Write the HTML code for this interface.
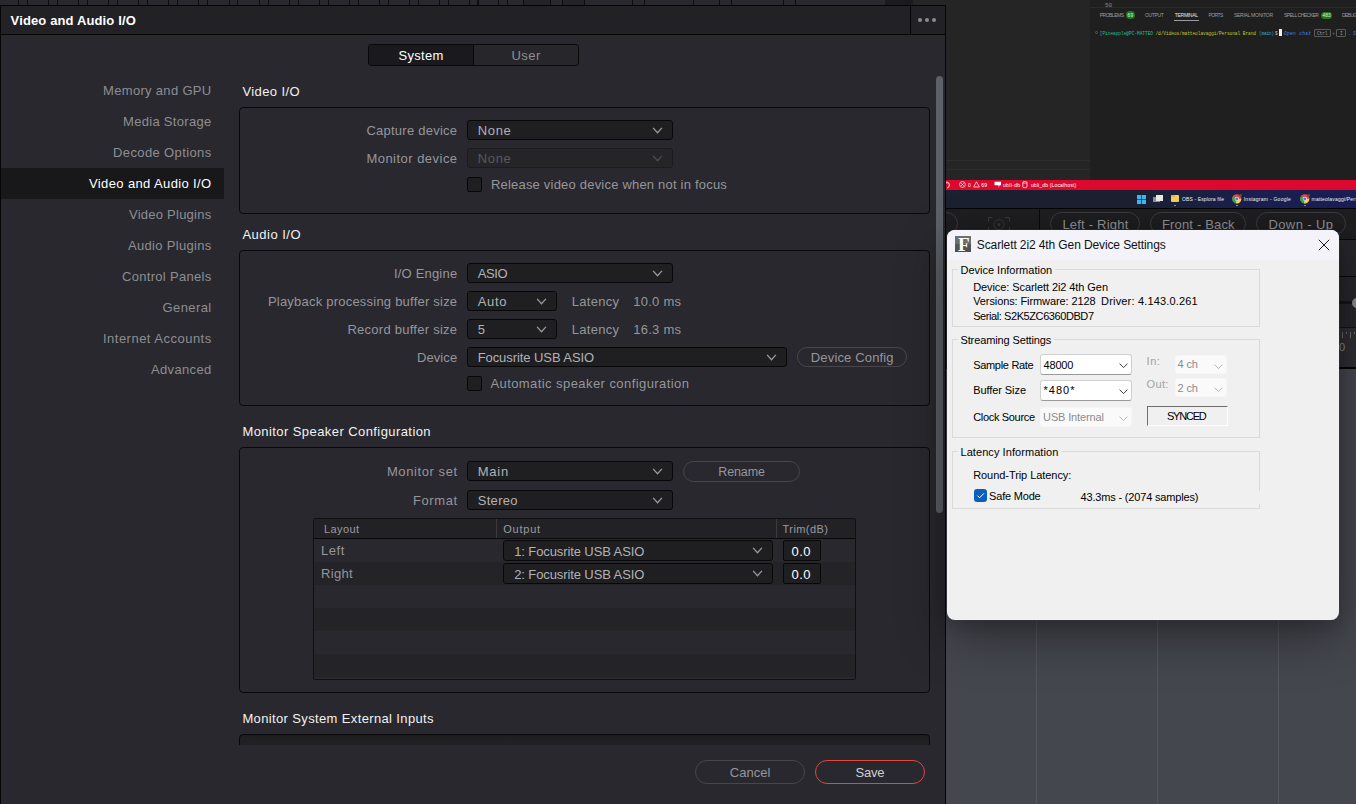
<!DOCTYPE html>
<html lang="en"><head><meta charset="utf-8"><title>Video and Audio I/O</title>
<style>
html,body{margin:0;padding:0;}
body{width:1356px;height:804px;overflow:hidden;position:relative;background:#252526;font-family:'Liberation Sans', sans-serif;}
.L{position:absolute;left:0;top:0;width:1356px;height:804px;overflow:hidden;}
.L div,.L span,.L svg{position:absolute;box-sizing:border-box;}
.L span{white-space:pre;line-height:1;}
</style></head><body>

<div class="L">
<div style="left:946px;top:0px;width:144px;height:180px;background:#252526;"></div>
<div style="left:1090px;top:0px;width:266px;height:180px;background:#1f1f1f;"></div>
<div style="left:1090px;top:7px;width:266px;height:1px;background:#2b2b2b;"></div>
<div style="left:946px;top:160px;width:144px;height:1px;background:#2d2d2e;"></div>
<div style="left:946px;top:169px;width:144px;height:1px;background:#2d2d2e;"></div>
<div style="left:946px;top:180px;width:410px;height:10px;background:#dc082e;"></div>
<div style="left:946px;top:190px;width:410px;height:18px;background:linear-gradient(90deg,#1b2130 0,#1b2130 45%,#1a2050 75%,#191f55 100%);"></div>
<div style="left:946px;top:208px;width:410px;height:1px;background:#050506;"></div>
<div style="left:946px;top:209px;width:410px;height:160px;background:#1e1e20;"></div>
<div style="left:1039px;top:209px;width:1px;height:30px;background:#0a0a0b;"></div>
<div style="left:1339px;top:239px;width:17px;height:1px;background:#08080a;"></div>
<div style="left:1339px;top:240px;width:17px;height:36px;background:#27272b;"></div>
<div style="left:1339px;top:276px;width:17px;height:1px;background:#08080a;"></div>
<div style="left:1339px;top:277px;width:17px;height:50px;background:#27272b;"></div>
<div style="left:1339px;top:301px;width:17px;height:3px;background:#151517;"></div>
<div style="left:1351.5px;top:297.5px;width:10px;height:10px;background:#8a8a8c;border-radius:50%;"></div>
<div style="left:1339px;top:327px;width:17px;height:1px;background:#141416;"></div>
<div style="left:1339px;top:328px;width:17px;height:39px;background:#2f2f34;"></div>
<div style="left:1342px;top:332px;width:1px;height:6px;background:#6a6a6e;"></div>
<div style="left:1346px;top:332px;width:1px;height:2px;background:#6a6a6e;"></div>
<div style="left:1350px;top:332px;width:1px;height:6px;background:#6a6a6e;"></div>
<div style="left:1354px;top:332px;width:1px;height:2px;background:#6a6a6e;"></div>
<span style="top:342px;font-size:11px;color:#8a8a8e;left:1338.96px;">0</span>
<div style="left:946px;top:367px;width:410px;height:2px;background:#060607;"></div>
<div style="left:946px;top:369px;width:410px;height:435px;background:#45474f;"></div>
<div style="left:1036px;top:369px;width:1px;height:435px;background:#55575d;"></div>
<div style="left:1157px;top:369px;width:1px;height:435px;background:#55575d;"></div>
<div style="left:1278px;top:369px;width:1px;height:435px;background:#55575d;"></div>
<div style="left:1050px;top:212px;width:90px;height:23px;border:1px solid #3c3c40;border-radius:12px;"></div>
<span style="top:217.5px;font-size:13px;color:#939398;letter-spacing:0.21px;left:1062.4px;">Left - Right</span>
<div style="left:1150px;top:212px;width:96px;height:23px;border:1px solid #3c3c40;border-radius:12px;"></div>
<span style="top:217.5px;font-size:13px;color:#939398;letter-spacing:0.173px;left:1161.9px;">Front - Back</span>
<div style="left:1256px;top:212px;width:90px;height:23px;border:1px solid #3c3c40;border-radius:12px;"></div>
<span style="top:217.5px;font-size:13px;color:#939398;letter-spacing:0.41px;left:1268.4px;">Down - Up</span>
<div style="left:928px;top:212px;width:30px;height:23px;border:1px solid #3c3c40;border-radius:12px;"></div>
<svg style="left:987px;top:216px" width="24" height="16" viewBox="0 0 24 16"><g fill="none" stroke="#3a3a3e" stroke-width="1"><path d="M1.5 5.5V1.5H5.5M18.5 1.5h4V5.5M1.5 11.5V16M22.5 11.5V16"/><circle cx="12" cy="8.7" r="5"/></g><circle cx="12" cy="8.7" r="1.4" fill="#3a3a3e"/></svg>
<span style="top:2.7px;font-size:6px;color:#8a8a8a;font-family:'Liberation Mono', monospace;letter-spacing:-0.019px;left:1104.91px;">50</span>
<span style="top:13px;font-size:5px;color:#9d9d9d;letter-spacing:-0.495px;left:1099.68px;">PROBLEMS</span>
<div style="left:1125.6px;top:10.8px;width:9.4px;height:8.6px;background:#1e7b1e;border-radius:5px;"></div>
<span style="top:14px;font-size:4.6px;color:#e8f5e8;letter-spacing:0.417px;left:1127.53px;">69</span>
<span style="top:13px;font-size:5px;color:#9d9d9d;letter-spacing:-0.346px;left:1144.88px;">OUTPUT</span>
<span style="top:13px;font-size:5px;color:#e4e4e4;letter-spacing:-0.293px;left:1174.78px;">TERMINAL</span>
<div style="left:1173.6px;top:19.7px;width:25.4px;height:0.8px;background:#9c9c9c;"></div>
<span style="top:13px;font-size:5px;color:#9d9d9d;letter-spacing:-0.602px;left:1208.58px;">PORTS</span>
<span style="top:13px;font-size:5px;color:#9d9d9d;letter-spacing:-0.253px;left:1233.88px;">SERIAL MONITOR</span>
<span style="top:13px;font-size:5px;color:#9d9d9d;letter-spacing:-0.516px;left:1283.88px;">SPELL CHECKER</span>
<div style="left:1320.6px;top:11.5px;width:11.8px;height:7.6px;background:#1e7b1e;border-radius:4px;"></div>
<span style="top:14px;font-size:4.6px;color:#e8f5e8;letter-spacing:0.135px;left:1322.53px;">483</span>
<span style="top:13px;font-size:5px;color:#9d9d9d;letter-spacing:-0.616px;left:1341.88px;">DEBUG CONSOLE</span>
<div style="left:1094.6px;top:31.2px;width:3px;height:3px;border:0.6px solid #5c5c5c;border-radius:50%;"></div>
<span style="top:31.8px;font-size:4.5px;color:#1fbf8f;font-family:'Liberation Mono', monospace;letter-spacing:-0.036px;left:1099.73px;">[Pineapple@PC-MATTEO</span>
<span style="top:31.8px;font-size:4.5px;color:#c4c42c;font-family:'Liberation Mono', monospace;letter-spacing:-0.054px;left:1155.43px;">/d/Videos/matteolavaggi/Personal Brand</span>
<span style="top:31.8px;font-size:4.5px;color:#2fa9c9;font-family:'Liberation Mono', monospace;letter-spacing:-0.213px;left:1258.93px;">(main)</span>
<span style="top:31.8px;font-size:4.5px;color:#cfcfcf;font-family:'Liberation Mono', monospace;left:1274.93px;">$</span>
<div style="left:1279px;top:29px;width:2.6px;height:7px;background:#f0f0f0;"></div>
<span style="top:31.8px;font-size:4.5px;color:#3f86e0;font-family:'Liberation Mono', monospace;letter-spacing:0.353px;left:1283.93px;font-style:italic;">Open chat</span>
<div style="left:1313.8px;top:29.3px;width:17.4px;height:7.4px;border:0.6px solid #5a5a5a;border-radius:1px;"></div>
<span style="top:31.8px;font-size:4.5px;color:#a0a0a0;font-family:'Liberation Mono', monospace;letter-spacing:-0.058px;left:1316.93px;">Ctrl</span>
<span style="top:31.8px;font-size:4.5px;color:#7a7a7a;font-family:'Liberation Mono', monospace;left:1332.33px;">+</span>
<div style="left:1336px;top:29.3px;width:10.4px;height:7.4px;border:0.6px solid #5a5a5a;border-radius:1px;"></div>
<span style="top:31.8px;font-size:4.5px;color:#a0a0a0;font-family:'Liberation Mono', monospace;left:1339.93px;">I</span>
<span style="top:31.8px;font-size:4.5px;color:#3f86e0;font-family:'Liberation Mono', monospace;left:1347.93px;">.</span>
<span style="top:31.8px;font-size:4.5px;color:#3f86e0;font-family:'Liberation Mono', monospace;left:1352.93px;font-style:italic;">Start typing</span>
<svg style="left:946px;top:181px" width="7" height="8" viewBox="0 0 7 8"><path d="M0 1.1A3 3 0 0 1 0 6.9" fill="none" stroke="#fff" stroke-width="0.9" transform="translate(1.2 0)"/><path d="M0 0.4v1.6h1.6" fill="none" stroke="#fff" stroke-width="0.7"/></svg>
<svg style="left:959px;top:181.4px" width="7" height="7" viewBox="0 0 7 7"><circle cx="3.5" cy="3.5" r="2.9" fill="none" stroke="#fff" stroke-width="0.7"/><path d="M2.3 2.3l2.4 2.4M4.7 2.3L2.3 4.7" stroke="#fff" stroke-width="0.7"/></svg>
<span style="top:183.2px;font-size:5px;color:#fff;left:967.92px;">0</span>
<svg style="left:973px;top:181.4px" width="7" height="7" viewBox="0 0 7 7"><path d="M3.5 0.8L6.4 6H0.6Z" fill="none" stroke="#fff" stroke-width="0.7" stroke-linejoin="round"/></svg>
<span style="top:183.2px;font-size:5px;color:#fff;letter-spacing:0.191px;left:981.22px;">69</span>
<svg style="left:994px;top:181px" width="8" height="8" viewBox="0 0 8 8"><path d="M0.5 0.8h6.5v3.4H5.6L4.6 7V4.2H0.5Z" fill="#fff"/></svg>
<span style="top:183.2px;font-size:5px;color:#fff;letter-spacing:0.356px;left:1002.92px;">ubli-db</span>
<svg style="left:1022.4px;top:181.4px" width="6" height="8" viewBox="0 0 6 8"><rect x="0.8" y="0.6" width="4.2" height="6" rx="1.2" fill="none" stroke="#fff" stroke-width="0.75"/><path d="M0.8 2.1h4.2" stroke="#fff" stroke-width="0.6"/></svg>
<span style="top:183.2px;font-size:5px;color:#fff;letter-spacing:0.161px;left:1030.92px;">ubli_db (Localhost)</span>
<svg style="left:1136.7px;top:194.6px" width="9.2" height="9" viewBox="0 0 92 90"><g fill="#43b4f0"><rect x="0" y="0" width="43" height="42"/><rect x="49" y="0" width="43" height="42"/><rect x="0" y="48" width="43" height="42"/><rect x="49" y="48" width="43" height="42"/></g></svg>
<div style="left:1153px;top:196.8px;width:7px;height:5.4px;background:#8f9094;"></div>
<div style="left:1155.6px;top:195px;width:7.4px;height:5.6px;background:#e9e9ea;"></div>
<div style="left:1170.5px;top:195.4px;width:8.6px;height:7px;background:#f4cf57;border-radius:1px;"></div>
<div style="left:1170.5px;top:194.6px;width:4px;height:2px;background:#e3b53a;border-radius:0.6px;"></div>
<div style="left:1173.6px;top:204.6px;width:2px;height:0.9px;background:#9a9aa0;border-radius:1px;"></div>
<span style="top:197.4px;font-size:5px;color:#f2f2f4;letter-spacing:0.141px;left:1181.92px;">OBS - Esplora file</span>
<svg style="left:1232px;top:194.4px" width="9.6" height="9.6" viewBox="0 0 96 96"><circle cx="48" cy="48" r="46" fill="#e8453c"/><path d="M48 48L8 25A46 46 0 0 0 38 93Z" fill="#2da94f"/><path d="M48 48L38 93A46 46 0 0 0 94 48Z" fill="#fdd33c"/><circle cx="48" cy="48" r="21" fill="#fff"/><circle cx="48" cy="48" r="16" fill="#3f83f0"/><circle cx="86" cy="14" r="14" fill="#6a4a3a"/></svg>
<div style="left:1235.8px;top:204.6px;width:2px;height:0.9px;background:#9a9aa0;border-radius:1px;"></div>
<span style="top:197.4px;font-size:5px;color:#f2f2f4;letter-spacing:0.255px;left:1243.72px;">Instagram - Google</span>
<svg style="left:1300px;top:194.4px" width="9.6" height="9.6" viewBox="0 0 96 96"><circle cx="48" cy="48" r="46" fill="#e8453c"/><path d="M48 48L8 25A46 46 0 0 0 38 93Z" fill="#2da94f"/><path d="M48 48L38 93A46 46 0 0 0 94 48Z" fill="#fdd33c"/><circle cx="48" cy="48" r="21" fill="#fff"/><circle cx="48" cy="48" r="16" fill="#3f83f0"/><circle cx="86" cy="14" r="14" fill="#6a4a3a"/></svg>
<div style="left:1303.8px;top:204.6px;width:2px;height:0.9px;background:#9a9aa0;border-radius:1px;"></div>
<span style="top:197.4px;font-size:5px;color:#f2f2f4;letter-spacing:0.191px;left:1311.62px;">matteolavaggi/Personal Brand</span>
</div>
<div class="L">
<div style="left:0px;top:0px;width:946px;height:804px;background:#28282e;"></div>
<div style="left:885px;top:0px;width:28px;height:5px;background:#1b1b1d;"></div>
<div style="left:913px;top:0px;width:33px;height:5px;background:#252526;"></div>
<div style="left:524px;top:0px;width:26px;height:5px;background:#232327;"></div>
<div style="left:563px;top:0px;width:21px;height:5px;background:#232327;"></div>
<div style="left:18px;top:0px;width:1px;height:5px;background:#0d0d0f;"></div>
<div style="left:48px;top:0px;width:1px;height:5px;background:#0d0d0f;"></div>
<div style="left:78px;top:0px;width:1px;height:5px;background:#0d0d0f;"></div>
<div style="left:108px;top:0px;width:1px;height:5px;background:#0d0d0f;"></div>
<div style="left:138px;top:0px;width:1px;height:5px;background:#0d0d0f;"></div>
<div style="left:168px;top:0px;width:1px;height:5px;background:#0d0d0f;"></div>
<div style="left:198px;top:0px;width:1px;height:5px;background:#0d0d0f;"></div>
<div style="left:229px;top:0px;width:1px;height:5px;background:#0d0d0f;"></div>
<div style="left:259px;top:0px;width:1px;height:5px;background:#0d0d0f;"></div>
<div style="left:289px;top:0px;width:1px;height:5px;background:#0d0d0f;"></div>
<div style="left:319px;top:0px;width:1px;height:5px;background:#0d0d0f;"></div>
<div style="left:349px;top:0px;width:1px;height:5px;background:#0d0d0f;"></div>
<div style="left:379px;top:0px;width:1px;height:5px;background:#0d0d0f;"></div>
<div style="left:409px;top:0px;width:1px;height:5px;background:#0d0d0f;"></div>
<div style="left:439px;top:0px;width:1px;height:5px;background:#0d0d0f;"></div>
<div style="left:469px;top:0px;width:1px;height:5px;background:#0d0d0f;"></div>
<div style="left:27px;top:0px;width:1px;height:5px;background:#0d0d0f;"></div>
<div style="left:57px;top:0px;width:1px;height:5px;background:#0d0d0f;"></div>
<div style="left:87px;top:0px;width:1px;height:5px;background:#0d0d0f;"></div>
<div style="left:117px;top:0px;width:1px;height:5px;background:#0d0d0f;"></div>
<div style="left:147px;top:0px;width:1px;height:5px;background:#0d0d0f;"></div>
<div style="left:177px;top:0px;width:1px;height:5px;background:#0d0d0f;"></div>
<div style="left:207px;top:0px;width:1px;height:5px;background:#0d0d0f;"></div>
<div style="left:237px;top:0px;width:1px;height:5px;background:#0d0d0f;"></div>
<div style="left:268px;top:0px;width:1px;height:5px;background:#0d0d0f;"></div>
<div style="left:298px;top:0px;width:1px;height:5px;background:#0d0d0f;"></div>
<div style="left:328px;top:0px;width:1px;height:5px;background:#0d0d0f;"></div>
<div style="left:358px;top:0px;width:1px;height:5px;background:#0d0d0f;"></div>
<div style="left:388px;top:0px;width:1px;height:5px;background:#0d0d0f;"></div>
<div style="left:418px;top:0px;width:1px;height:5px;background:#0d0d0f;"></div>
<div style="left:448px;top:0px;width:1px;height:5px;background:#0d0d0f;"></div>
<div style="left:478px;top:0px;width:1px;height:5px;background:#0d0d0f;"></div>
<div style="left:477px;top:0px;width:1px;height:5px;background:#0d0d0f;"></div>
<div style="left:498px;top:0px;width:1px;height:5px;background:#0d0d0f;"></div>
<div style="left:507px;top:0px;width:1px;height:5px;background:#0d0d0f;"></div>
<div style="left:523px;top:0px;width:1px;height:5px;background:#0d0d0f;"></div>
<div style="left:550px;top:0px;width:1px;height:5px;background:#0d0d0f;"></div>
<div style="left:562px;top:0px;width:1px;height:5px;background:#0d0d0f;"></div>
<div style="left:584px;top:0px;width:1px;height:5px;background:#0d0d0f;"></div>
<div style="left:632px;top:0px;width:1px;height:5px;background:#0d0d0f;"></div>
<div style="left:644px;top:0px;width:1px;height:5px;background:#0d0d0f;"></div>
<div style="left:693px;top:0px;width:1px;height:5px;background:#0d0d0f;"></div>
<div style="left:719px;top:0px;width:1px;height:5px;background:#0d0d0f;"></div>
<div style="left:731px;top:0px;width:1px;height:5px;background:#0d0d0f;"></div>
<div style="left:783px;top:0px;width:1px;height:5px;background:#0d0d0f;"></div>
<div style="left:795px;top:0px;width:1px;height:5px;background:#0d0d0f;"></div>
<div style="left:0px;top:5px;width:946px;height:30px;background:#212126;border:1px solid #050506;"></div>
<div style="left:910px;top:6px;width:1px;height:28px;background:#050506;"></div>
<div style="left:917.9px;top:17.9px;width:4.2px;height:4.2px;background:#8c8c8e;border-radius:50%;"></div>
<div style="left:924.9px;top:17.9px;width:4.2px;height:4.2px;background:#8c8c8e;border-radius:50%;"></div>
<div style="left:931.9px;top:17.9px;width:4.2px;height:4.2px;background:#8c8c8e;border-radius:50%;"></div>
<div style="left:0px;top:35px;width:1px;height:769px;background:#050506;"></div>
<div style="left:945px;top:35px;width:1px;height:769px;background:#050506;"></div>
<span style="top:14px;font-size:13px;color:#ffffff;font-weight:700;letter-spacing:0.134px;left:10.6px;">Video and Audio I/O</span>
<div style="left:368px;top:44px;width:211px;height:22px;background:#26262b;border:1px solid #09090b;border-radius:3px;"></div>
<div style="left:369px;top:45px;width:104px;height:20px;background:#1a1a1e;border-radius:2px 0 0 2px;"></div>
<div style="left:473px;top:45px;width:1px;height:20px;background:#09090b;"></div>
<span style="top:49px;font-size:13px;color:#ffffff;letter-spacing:0.321px;left:398.4px;">System</span>
<span style="top:49px;font-size:13px;color:#8e8e93;letter-spacing:0.499px;left:511.4px;">User</span>
<div style="left:1px;top:168px;width:223px;height:31px;background:#18181b;"></div>
<span style="top:84px;font-size:13px;color:#8e8e93;letter-spacing:0.319px;right:1144.48px;">Memory and GPU</span>
<span style="top:115px;font-size:13px;color:#8e8e93;letter-spacing:0.303px;right:1144.5px;">Media Storage</span>
<span style="top:146px;font-size:13px;color:#8e8e93;letter-spacing:0.382px;right:1144.42px;">Decode Options</span>
<span style="top:177px;font-size:13px;color:#ffffff;letter-spacing:0.377px;right:1144.42px;">Video and Audio I/O</span>
<span style="top:208px;font-size:13px;color:#8e8e93;letter-spacing:0.245px;right:1144.56px;">Video Plugins</span>
<span style="top:239px;font-size:13px;color:#8e8e93;letter-spacing:0.308px;right:1144.49px;">Audio Plugins</span>
<span style="top:270px;font-size:13px;color:#8e8e93;letter-spacing:0.301px;right:1144.5px;">Control Panels</span>
<span style="top:301px;font-size:13px;color:#8e8e93;letter-spacing:0.408px;right:1144.39px;">General</span>
<span style="top:332px;font-size:13px;color:#8e8e93;letter-spacing:0.484px;right:1144.32px;">Internet Accounts</span>
<span style="top:363px;font-size:13px;color:#8e8e93;letter-spacing:0.339px;right:1144.46px;">Advanced</span>
<div style="left:936px;top:76px;width:7px;height:437px;background:#5c6068;border-radius:3.5px;"></div>
<span style="top:85px;font-size:13px;color:#f2f2f2;letter-spacing:0.404px;left:242.4px;">Video I/O</span>
<div style="left:239px;top:107px;width:691px;height:107px;border:1px solid #09090b;border-radius:4px;"></div>
<span style="top:124px;font-size:13px;color:#96969b;letter-spacing:0.25px;right:898.65px;">Capture device</span>
<div style="left:467px;top:120px;width:206px;height:20px;background:#1f1f21;border:1px solid #08080a;border-radius:3px;"></div>
<span style="top:124px;font-size:13px;color:#b2b2b6;letter-spacing:0.707px;left:477.65px;">None</span>
<svg style="left:652px;top:127.3px" width="11" height="7" viewBox="0 0 11 7"><path d="M1.1 0.9l4.4 4.9 4.4-4.9" fill="none" stroke="#9a9a9e" stroke-width="1.3"/></svg>
<span style="top:152px;font-size:13px;color:#96969b;letter-spacing:0.473px;right:898.43px;">Monitor device</span>
<div style="left:467px;top:148px;width:206px;height:20px;background:#252529;border:1px solid #1c1c1f;border-radius:3px;"></div>
<span style="top:152px;font-size:13px;color:#58585c;letter-spacing:0.707px;left:477.65px;">None</span>
<svg style="left:652px;top:155.3px" width="11" height="7" viewBox="0 0 11 7"><path d="M1.1 0.9l4.4 4.9 4.4-4.9" fill="none" stroke="#4e4e52" stroke-width="1.3"/></svg>
<div style="left:467px;top:177px;width:15px;height:15px;background:#1f1f21;border:1px solid #08080a;border-radius:2px;"></div>
<span style="top:178px;font-size:13px;color:#96969b;letter-spacing:0.205px;left:490.9px;">Release video device when not in focus</span>
<span style="top:228px;font-size:13px;color:#f2f2f2;letter-spacing:0.5px;left:242.4px;">Audio I/O</span>
<div style="left:239px;top:250px;width:691px;height:156px;border:1px solid #09090b;border-radius:4px;"></div>
<span style="top:267px;font-size:13px;color:#96969b;letter-spacing:0.196px;right:898.7px;">I/O Engine</span>
<div style="left:467px;top:263px;width:206px;height:20px;background:#1f1f21;border:1px solid #08080a;border-radius:3px;"></div>
<span style="top:267px;font-size:13px;color:#b2b2b6;letter-spacing:-0.376px;left:477.65px;">ASIO</span>
<svg style="left:652px;top:270.3px" width="11" height="7" viewBox="0 0 11 7"><path d="M1.1 0.9l4.4 4.9 4.4-4.9" fill="none" stroke="#9a9a9e" stroke-width="1.3"/></svg>
<span style="top:295px;font-size:13px;color:#96969b;letter-spacing:0.221px;right:898.68px;">Playback processing buffer size</span>
<div style="left:467px;top:291px;width:90px;height:20px;background:#1f1f21;border:1px solid #08080a;border-radius:3px;"></div>
<span style="top:295px;font-size:13px;color:#b2b2b6;letter-spacing:0.733px;left:477.65px;">Auto</span>
<svg style="left:536px;top:298.3px" width="11" height="7" viewBox="0 0 11 7"><path d="M1.1 0.9l4.4 4.9 4.4-4.9" fill="none" stroke="#9a9a9e" stroke-width="1.3"/></svg>
<span style="top:295px;font-size:13px;color:#96969b;letter-spacing:0.292px;left:571.8px;">Latency</span>
<span style="top:295px;font-size:13px;color:#96969b;letter-spacing:0.258px;left:633.2px;">10.0 ms</span>
<span style="top:323px;font-size:13px;color:#96969b;letter-spacing:0.261px;right:898.64px;">Record buffer size</span>
<div style="left:467px;top:319px;width:90px;height:20px;background:#1f1f21;border:1px solid #08080a;border-radius:3px;"></div>
<span style="top:323px;font-size:13px;color:#b2b2b6;left:477.65px;">5</span>
<svg style="left:536px;top:326.3px" width="11" height="7" viewBox="0 0 11 7"><path d="M1.1 0.9l4.4 4.9 4.4-4.9" fill="none" stroke="#9a9a9e" stroke-width="1.3"/></svg>
<span style="top:323px;font-size:13px;color:#96969b;letter-spacing:0.292px;left:571.8px;">Latency</span>
<span style="top:323px;font-size:13px;color:#96969b;letter-spacing:0.258px;left:633.2px;">16.3 ms</span>
<span style="top:351px;font-size:13px;color:#96969b;letter-spacing:0.09px;right:898.81px;">Device</span>
<div style="left:467px;top:347px;width:320px;height:20px;background:#1f1f21;border:1px solid #08080a;border-radius:3px;"></div>
<span style="top:351px;font-size:13px;color:#b2b2b6;letter-spacing:-0.069px;left:477.65px;">Focusrite USB ASIO</span>
<svg style="left:766px;top:354.3px" width="11" height="7" viewBox="0 0 11 7"><path d="M1.1 0.9l4.4 4.9 4.4-4.9" fill="none" stroke="#9a9a9e" stroke-width="1.3"/></svg>
<div style="left:797px;top:347px;width:110px;height:20px;border:1px solid #46464b;border-radius:10.0px;"></div>
<span style="top:351px;font-size:13px;color:#96969b;letter-spacing:0.155px;left:810.8px;">Device Config</span>
<div style="left:467px;top:376px;width:15px;height:15px;background:#1f1f21;border:1px solid #08080a;border-radius:2px;"></div>
<span style="top:377px;font-size:13px;color:#96969b;letter-spacing:0.429px;left:490.4px;">Automatic speaker configuration</span>
<span style="top:425px;font-size:13px;color:#f2f2f2;letter-spacing:0.424px;left:242.4px;">Monitor Speaker Configuration</span>
<div style="left:239px;top:447px;width:691px;height:246px;border:1px solid #09090b;border-radius:4px;"></div>
<span style="top:465px;font-size:13px;color:#96969b;letter-spacing:0.589px;right:898.31px;">Monitor set</span>
<div style="left:467px;top:461px;width:206px;height:20px;background:#1f1f21;border:1px solid #08080a;border-radius:3px;"></div>
<span style="top:465px;font-size:13px;color:#b2b2b6;letter-spacing:0.837px;left:477.65px;">Main</span>
<svg style="left:652px;top:468.3px" width="11" height="7" viewBox="0 0 11 7"><path d="M1.1 0.9l4.4 4.9 4.4-4.9" fill="none" stroke="#9a9a9e" stroke-width="1.3"/></svg>
<div style="left:683px;top:461px;width:117px;height:21px;border:1px solid #46464b;border-radius:10.5px;"></div>
<span style="top:466px;font-size:12.5px;color:#96969b;letter-spacing:-0.099px;left:718.22px;">Rename</span>
<span style="top:494px;font-size:13px;color:#96969b;letter-spacing:0.606px;right:898.29px;">Format</span>
<div style="left:467px;top:490px;width:206px;height:20px;background:#1f1f21;border:1px solid #08080a;border-radius:3px;"></div>
<span style="top:494px;font-size:13px;color:#b2b2b6;letter-spacing:0.328px;left:477.65px;">Stereo</span>
<svg style="left:652px;top:497.3px" width="11" height="7" viewBox="0 0 11 7"><path d="M1.1 0.9l4.4 4.9 4.4-4.9" fill="none" stroke="#9a9a9e" stroke-width="1.3"/></svg>
<div style="left:313px;top:518px;width:543px;height:162px;background:#28282e;border:1px solid #101012;border-radius:2px;"></div>
<div style="left:314px;top:519px;width:541px;height:19px;background:#222226;"></div>
<div style="left:314px;top:538px;width:541px;height:1px;background:#09090b;"></div>
<div style="left:496px;top:519px;width:1px;height:19px;background:#3a3a3f;"></div>
<div style="left:776px;top:519px;width:1px;height:19px;background:#3a3a3f;"></div>
<div style="left:314px;top:562px;width:541px;height:23px;background:#242428;"></div>
<div style="left:314px;top:608px;width:541px;height:23px;background:#242428;"></div>
<div style="left:314px;top:654px;width:541px;height:23px;background:#242428;"></div>
<span style="top:524px;font-size:11px;color:#9a9a9f;letter-spacing:0.423px;left:323.88px;">Layout</span>
<span style="top:524px;font-size:11px;color:#9a9a9f;letter-spacing:0.763px;left:503.28px;">Output</span>
<span style="top:524px;font-size:11px;color:#9a9a9f;letter-spacing:0.424px;left:782.58px;">Trim(dB)</span>
<span style="top:544px;font-size:13px;color:#96969b;letter-spacing:0.504px;left:321.1px;">Left</span>
<span style="top:567px;font-size:13px;color:#96969b;letter-spacing:0.285px;left:321.1px;">Right</span>
<div style="left:503px;top:540px;width:270px;height:21px;background:#1f1f21;border:1px solid #08080a;border-radius:3px;"></div>
<span style="top:544.6px;font-size:13px;color:#b2b2b6;letter-spacing:-0.101px;left:514.15px;">1: Focusrite USB ASIO</span>
<svg style="left:752px;top:547.3px" width="11" height="7" viewBox="0 0 11 7"><path d="M1.1 0.9l4.4 4.9 4.4-4.9" fill="none" stroke="#9a9a9e" stroke-width="1.3"/></svg>
<div style="left:783px;top:540px;width:38px;height:21px;background:#1f1f21;border:1px solid #08080a;border-radius:2px;"></div>
<span style="top:544.6px;font-size:13px;color:#ffffff;letter-spacing:0.561px;left:791.4px;">0.0</span>
<div style="left:503px;top:563px;width:270px;height:21px;background:#1f1f21;border:1px solid #08080a;border-radius:3px;"></div>
<span style="top:567.6px;font-size:13px;color:#b2b2b6;letter-spacing:-0.101px;left:514.15px;">2: Focusrite USB ASIO</span>
<svg style="left:752px;top:570.3px" width="11" height="7" viewBox="0 0 11 7"><path d="M1.1 0.9l4.4 4.9 4.4-4.9" fill="none" stroke="#9a9a9e" stroke-width="1.3"/></svg>
<div style="left:783px;top:563px;width:38px;height:21px;background:#1f1f21;border:1px solid #08080a;border-radius:2px;"></div>
<span style="top:567.6px;font-size:13px;color:#ffffff;letter-spacing:0.561px;left:791.4px;">0.0</span>
<span style="top:712px;font-size:13px;color:#f2f2f2;letter-spacing:0.364px;left:242.4px;">Monitor System External Inputs</span>
<div style="left:239px;top:734px;width:691px;height:11px;overflow:hidden;"></div>
<div style="left:239px;top:734px;width:691px;height:11px;overflow:hidden"><div style="left:0;top:0;width:691px;height:60px;border:1px solid #09090b;border-radius:4px;background:linear-gradient(#1d1d20,#232327 10px)"></div></div>
<div style="left:695px;top:760px;width:110px;height:24px;border:1px solid #46464b;border-radius:12.0px;"></div>
<span style="top:766px;font-size:13px;color:#96969b;letter-spacing:0.006px;left:729.8px;">Cancel</span>
<div style="left:815px;top:760px;width:110px;height:24px;border:1px solid #e0483c;border-radius:12.0px;"></div>
<span style="top:766px;font-size:13px;color:#cfcfd2;letter-spacing:-0.147px;left:855.4px;">Save</span>
</div>
<div class="L">
<div style="left:947px;top:230px;width:392px;height:390px;border-radius:8px;background:#f0f0f0;box-shadow:0 0 0 0.5px rgba(70,70,75,.5),0 16px 50px rgba(0,0,0,.40),0 4px 16px rgba(0,0,0,.16);overflow:hidden"><div style="left:0;top:0;width:392px;height:30px;background:#f3f3f9"></div></div>
<div style="left:955px;top:236px;width:16px;height:16px;background:linear-gradient(#707070 0,#6c6c6c 48%,#565656 52%,#505050 100%)"></div>
<span style="top:234.5px;font-size:19px;color:#ffffff;font-family:'Liberation Serif', serif;font-weight:700;left:957.96px;">F</span>
<span style="top:239.2px;font-size:12px;color:#111111;letter-spacing:-0.11px;left:976.84px;">Scarlett 2i2 4th Gen Device Settings</span>
<svg style="left:1318px;top:238.5px" width="12" height="12" viewBox="0 0 12 12"><path d="M0.8 0.8l10.4 10.4M11.2 0.8L0.8 11.2" stroke="#1a1a1a" stroke-width="1" fill="none"/></svg>
<div style="left:952px;top:269px;width:308px;height:58px;border:1px solid #dadada;"></div>
<div style="left:958px;top:268px;width:96.8px;height:3px;background:#f0f0f0;"></div>
<span style="top:265px;font-size:11px;color:#000000;letter-spacing:-0.004px;left:960.48px;">Device Information</span>
<span style="top:281.6px;font-size:11px;color:#000000;letter-spacing:-0.079px;left:973.18px;">Device: Scarlett 2i2 4th Gen</span>
<span style="top:295.8px;font-size:11px;color:#000000;letter-spacing:-0.099px;left:973.18px;">Versions: Firmware: 2128</span>
<span style="top:295.8px;font-size:11px;color:#000000;letter-spacing:0.171px;left:1101.08px;">Driver: 4.143.0.261</span>
<span style="top:310.7px;font-size:11px;color:#000000;letter-spacing:-0.418px;left:973.18px;">Serial: S2K5ZC6360DBD7</span>
<div style="left:952px;top:339px;width:308px;height:99px;border:1px solid #dadada;"></div>
<div style="left:958px;top:338px;width:96px;height:3px;background:#f0f0f0;"></div>
<span style="top:335px;font-size:11px;color:#000000;letter-spacing:-0.123px;left:960.48px;">Streaming Settings</span>
<span style="top:360px;font-size:11px;color:#000000;letter-spacing:-0.305px;left:973.18px;">Sample Rate</span>
<div style="left:1040px;top:354px;width:92px;height:21px;background:#ffffff;border:1px solid #d0d0d0;border-bottom-color:#9a9a9a;border-radius:3px;"></div>
<span style="top:360px;font-size:11px;color:#000000;letter-spacing:-0.187px;left:1043.58px;">48000</span>
<svg style="left:1118.5px;top:362.6px" width="9" height="6" viewBox="0 0 9 6"><path d="M0.5 0.6l4 4 4-4" fill="none" stroke="#3a3a3a" stroke-width="1"/></svg>
<span style="top:385.4px;font-size:11px;color:#000000;letter-spacing:-0.076px;left:973.18px;">Buffer Size</span>
<div style="left:1040px;top:380px;width:92px;height:21px;background:#ffffff;border:1px solid #d0d0d0;border-bottom-color:#9a9a9a;border-radius:3px;"></div>
<span style="top:385.4px;font-size:11px;color:#000000;letter-spacing:0.981px;left:1043.58px;">*480*</span>
<svg style="left:1118.5px;top:388.6px" width="9" height="6" viewBox="0 0 9 6"><path d="M0.5 0.6l4 4 4-4" fill="none" stroke="#3a3a3a" stroke-width="1"/></svg>
<span style="top:411.5px;font-size:11px;color:#000000;letter-spacing:-0.325px;left:973.18px;">Clock Source</span>
<div style="left:1040px;top:407px;width:92px;height:20px;background:#fafafa;border:1px solid #f6f6f6;border-radius:3px;"></div>
<span style="top:411.5px;font-size:11px;color:#8c8c8c;letter-spacing:-0.139px;left:1043.08px;">USB Internal</span>
<svg style="left:1118.5px;top:415.6px" width="9" height="6" viewBox="0 0 9 6"><path d="M0.5 0.6l4 4 4-4" fill="none" stroke="#b5b5b5" stroke-width="1"/></svg>
<span style="top:356px;font-size:11px;color:#a2a2a2;letter-spacing:0.556px;left:1146.58px;">In:</span>
<div style="left:1175px;top:355px;width:52px;height:19px;background:#fafafa;border:1px solid #f6f6f6;border-radius:3px;"></div>
<span style="top:359.4px;font-size:11px;color:#8c8c8c;letter-spacing:-0.15px;left:1177.58px;">4 ch</span>
<svg style="left:1213.5px;top:363.6px" width="9" height="6" viewBox="0 0 9 6"><path d="M0.5 0.6l4 4 4-4" fill="none" stroke="#b5b5b5" stroke-width="1"/></svg>
<span style="top:378.8px;font-size:11px;color:#a2a2a2;letter-spacing:0.35px;left:1146.58px;">Out:</span>
<div style="left:1175px;top:378px;width:52px;height:19px;background:#fafafa;border:1px solid #f6f6f6;border-radius:3px;"></div>
<span style="top:382.5px;font-size:11px;color:#8c8c8c;letter-spacing:-0.15px;left:1177.58px;">2 ch</span>
<svg style="left:1213.5px;top:386.6px" width="9" height="6" viewBox="0 0 9 6"><path d="M0.5 0.6l4 4 4-4" fill="none" stroke="#b5b5b5" stroke-width="1"/></svg>
<div style="left:1147px;top:406px;width:81px;height:20px;background:#f0f0f0;border:1px solid;border-color:#6e6e6e #ffffff #ffffff #6e6e6e;"></div>
<span style="top:410.9px;font-size:11px;color:#000000;letter-spacing:-1.2px;left:1166.88px;">SYNCED</span>
<div style="left:952px;top:451px;width:308px;height:58px;border:1px solid #dadada;"></div>
<div style="left:958px;top:450px;width:103px;height:3px;background:#f0f0f0;"></div>
<span style="top:447px;font-size:11px;color:#000000;letter-spacing:0.068px;left:960.48px;">Latency Information</span>
<span style="top:470px;font-size:11px;color:#000000;letter-spacing:-0.062px;left:973.18px;">Round-Trip Latency:</span>
<div style="left:974px;top:489px;width:13px;height:13px;background:#0a5fbd;border-radius:3px;"></div>
<svg style="left:974px;top:489px" width="13" height="13" viewBox="0 0 13 13"><path d="M3.4 6.6l2.2 2.2 4.2-4.4" fill="none" stroke="#ffffff" stroke-width="1"/></svg>
<span style="top:490.5px;font-size:11px;color:#000000;letter-spacing:-0.195px;left:989.08px;">Safe Mode</span>
<div style="left:1078px;top:491px;width:184px;height:13px;background:#f0f0f0;"></div>
<span style="top:492.4px;font-size:11px;color:#000000;letter-spacing:-0.174px;left:1080.58px;">43.3ms - (2074 samples)</span>
</div>
</body></html>
